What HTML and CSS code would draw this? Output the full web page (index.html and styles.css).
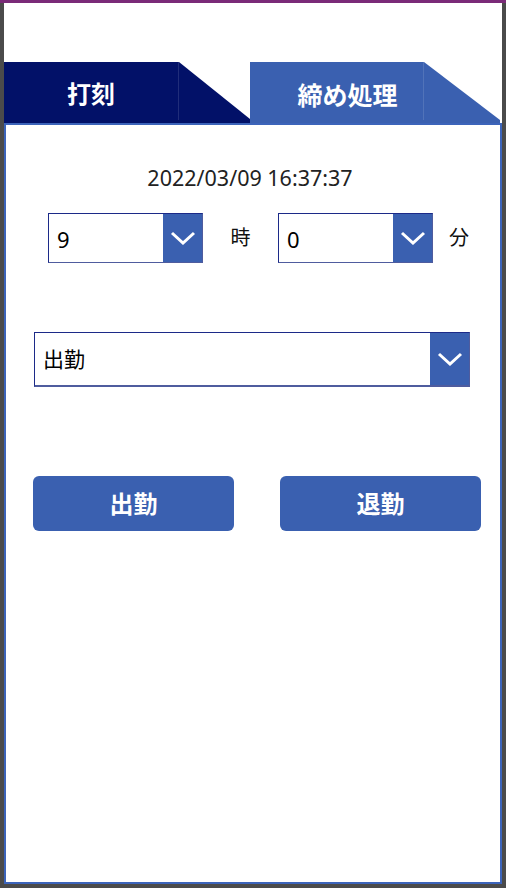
FILE: index.html
```html
<!DOCTYPE html>
<html lang="ja">
<head>
    <meta charset="UTF-8">
    <meta name="viewport" content="width=device-width, initial-scale=1.0">
    <title>打刻</title>
    <link rel="stylesheet" href="styles.css">
</head>
<body>
    <div class="topbar"></div>
    <div class="screen">
        <div class="tabs">
            <div class="tab tab-stamp">
                <span class="tab-label">打刻</span>
            </div>
            <div class="tab tab-close">
                <span class="tab-label">締め処理</span>
            </div>
        </div>

        <div class="panel">
            <div class="now">2022/03/09 16:37:37</div>

            <div class="time-row">
                <div class="dropdown small">
                    <span class="value">9</span>
                    <span class="chevron">
                        <svg width="26" height="14" viewBox="0 0 26 14"><polyline points="2,2 13,12 24,2" fill="none" stroke="#fff" stroke-width="3"/></svg>
                    </span>
                </div>
                <span class="unit unit-hour">時</span>
                <div class="dropdown small">
                    <span class="value">0</span>
                    <span class="chevron">
                        <svg width="26" height="14" viewBox="0 0 26 14"><polyline points="2,2 13,12 24,2" fill="none" stroke="#fff" stroke-width="3"/></svg>
                    </span>
                </div>
                <span class="unit unit-min">分</span>
            </div>

            <div class="dropdown wide">
                <span class="value">出勤</span>
                <span class="chevron">
                    <svg width="26" height="14" viewBox="0 0 26 14"><polyline points="2,2 13,12 24,2" fill="none" stroke="#fff" stroke-width="3"/></svg>
                </span>
            </div>

            <div class="actions">
                <button class="btn">出勤</button>
                <button class="btn">退勤</button>
            </div>
        </div>
    </div>
</body>
</html>
```

FILE: styles.css
```css
body {
    margin: 0;
    background-color: #4b4b4b;
    font-family: "Noto Sans", "Noto Sans CJK JP", sans-serif;
    color: #111;
}
.topbar {
    height: 3px;
    background-color: #7a2a78;
}
.screen {
    margin: 0 4px;
    height: 881px;
    background: #fff;
    display: flex;
    flex-direction: column;
}
.tabs {
    display: flex;
    padding-top: 59px;
    height: 61px;
}
.tab {
    height: 61px;
    display: flex;
}
.tab-stamp {
    width: 246px;
    background-color: #021168;
    clip-path: polygon(0 0, 175px 0, 246px 57px, 246px 100%, 0 100%);
}
.tab-close {
    width: 251px;
    background-color: #3a60b0;
    clip-path: polygon(0 0, 174px 0, 250px 58px, 250px 100%, 0 100%);
}
.tab-label {
    box-sizing: border-box;
    height: 58px;
    display: flex;
    align-items: center;
    justify-content: center;
    color: #fff;
    font-family: "Noto Sans CJK JP", sans-serif;
    font-weight: bold;
    font-size: 24px;
    border-right: 1px solid rgba(255, 255, 255, 0.12);
}
.tab-stamp .tab-label {
    width: 175px;
    padding-top: 2px;
}
.tab-close .tab-label {
    width: 174px;
    padding-left: 22px;
    padding-top: 5px;
    font-size: 25px;
}
.panel {
    flex: 1;
    border: 2px solid #3c64ba;
    display: flex;
    flex-direction: column;
}
.now {
    margin-top: 39px;
    padding-right: 6px;
    text-align: center;
    font-size: 21.5px;
    line-height: 28px;
    color: #222;
}
.time-row {
    display: flex;
    align-items: center;
    margin-top: 21px;
    margin-left: 42px;
}
.dropdown {
    box-sizing: border-box;
    display: flex;
    border: 1px solid #1c2a88;
    border-bottom-color: #4f5c9e;
    border-right-color: #4f5c9e;
    background: #fff;
}
.dropdown .value {
    flex: 1;
    display: flex;
    align-items: center;
    font-size: 22px;
    color: #000;
}
.dropdown .chevron {
    width: 39px;
    background-color: #3a60b0;
    display: flex;
    align-items: center;
    justify-content: center;
}
.small {
    width: 155px;
    height: 50px;
}
.small .value {
    padding-left: 8px;
    padding-top: 2px;
}
.unit {
    font-family: "Noto Sans CJK JP", sans-serif;
    font-size: 20px;
    color: #111;
    margin-bottom: 4px;
}
.unit-hour {
    width: 75px;
    text-align: center;
}
.unit-min {
    margin-left: 16px;
}
.wide {
    width: 436px;
    height: 55px;
    margin-top: 69px;
    margin-left: 28px;
    border-bottom-width: 2px;
}
.wide .value {
    padding-left: 8px;
    padding-bottom: 3px;
    font-family: "Noto Sans CJK JP", sans-serif;
    font-size: 21px;
}
.actions {
    display: flex;
    margin-top: 89px;
    margin-left: 27px;
    gap: 46px;
}
.btn {
    width: 201px;
    height: 55px;
    border: none;
    border-radius: 6px;
    background-color: #3a60b0;
    color: #fff;
    font-family: "Noto Sans CJK JP", sans-serif;
    font-weight: bold;
    font-size: 24px;
    padding: 0 0 3px;
}
```
